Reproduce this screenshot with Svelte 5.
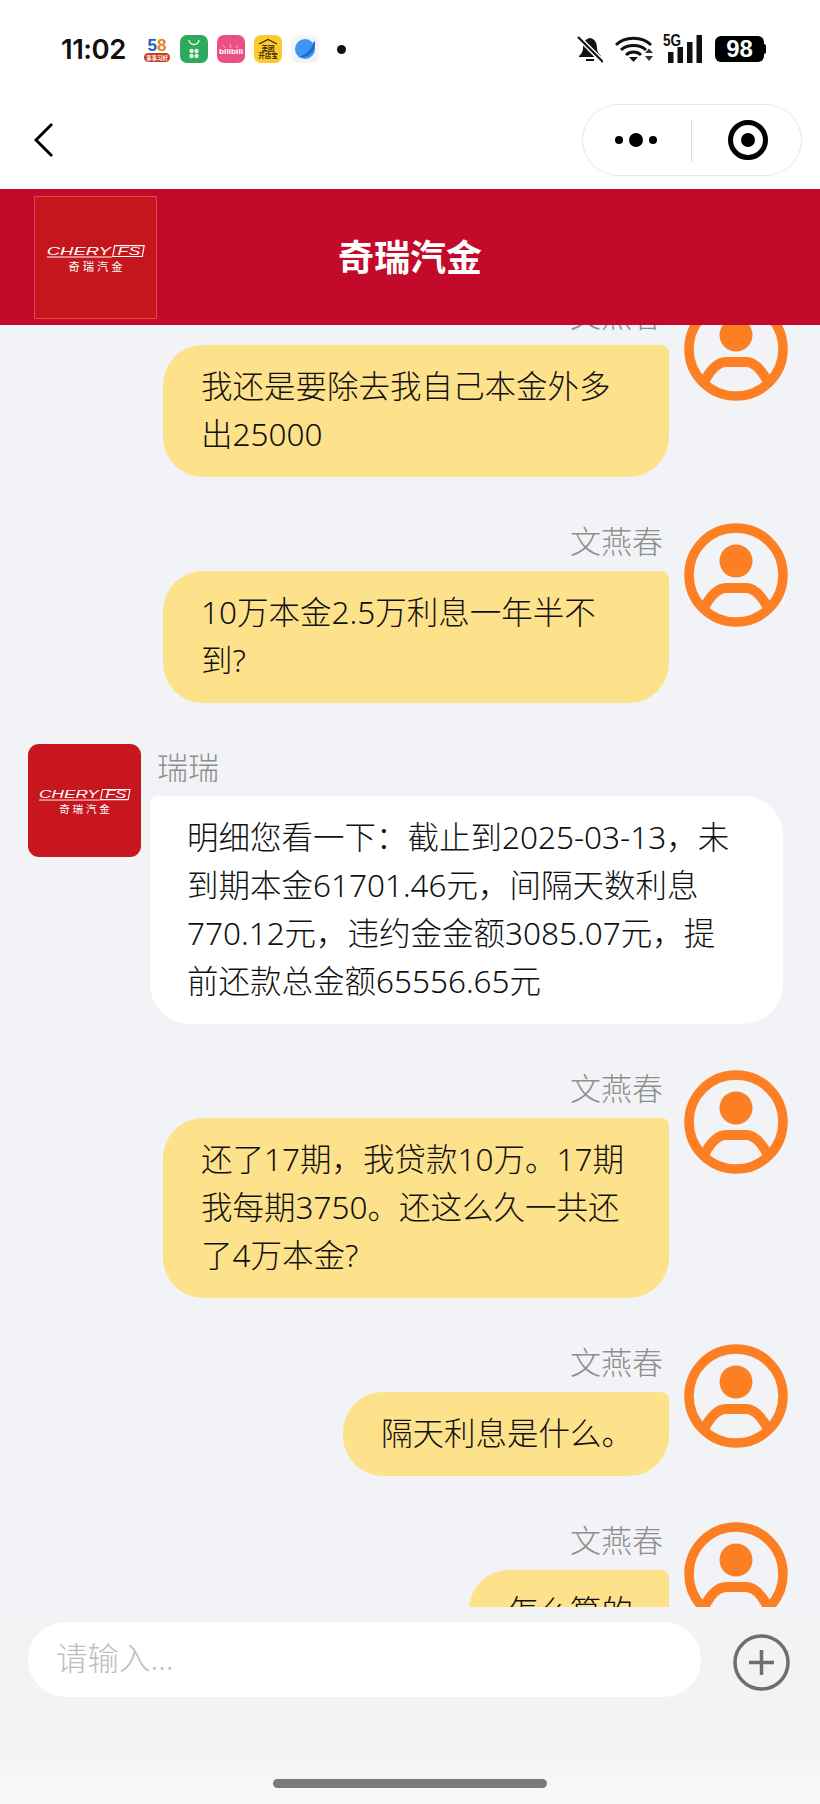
<script>
  const messages = [
    { side: 'right', name: '文燕春', text: '我还是要除去我自己本金外多出25000' },
    { side: 'right', name: '文燕春', text: '10万本金2.5万利息一年半不到?' },
    { side: 'left', name: '瑞瑞', text: '明细您看一下：截止到2025-03-13，未到期本金61701.46元，间隔天数利息770.12元，违约金金额3085.07元，提前还款总金额65556.65元' },
    { side: 'right', name: '文燕春', text: '还了17期，我贷款10万。17期我每期3750。还这么久一共还了4万本金?' },
    { side: 'right', name: '文燕春', text: '隔天利息是什么。' },
    { side: 'right', name: '文燕春', text: '怎么算的' }
  ];
</script>

{#snippet cheryLogo()}
  <svg class="logo-art" viewBox="0 0 123 123">
    <text class="logo-en" x="12" y="59" textLength="65" lengthAdjust="spacingAndGlyphs">CHERY</text>
    <path d="M12 61H78" stroke="#fff" stroke-width="1" />
    <path d="M81 49.500H111L109 60.500H79Z" fill="none" stroke="#fff" stroke-width="1.200" />
    <text class="logo-en" x="84" y="59" textLength="23" lengthAdjust="spacingAndGlyphs">FS</text>
    <text class="logo-cn" x="34" y="75" textLength="55">奇瑞汽金</text>
  </svg>
{/snippet}

{#snippet userAvatar()}
  <svg class="avatar" viewBox="0 0 104 104">
    <circle cx="52" cy="52" r="47" fill="none" stroke="#fd7f23" stroke-width="9.500" />
    <circle cx="52" cy="38" r="16.500" fill="#fd7f23" />
    <path d="M19 87C26 73 34 65 42 65H62C70 65 78 73 85 87" fill="none" stroke="#fd7f23" stroke-width="10" />
  </svg>
{/snippet}

<div class="page">
  <div class="status-bar">
    <span class="time">11:02</span>
    <div class="app-icons">
      <svg class="app" viewBox="0 0 28 28">
        <text x="14" y="15.500" text-anchor="middle" class="t58"><tspan fill="#1e5fc0">5</tspan><tspan fill="#e8841a">8</tspan></text>
        <rect x="1" y="18" width="26" height="9" rx="4.500" fill="#c8401f" />
        <text x="14" y="25" text-anchor="middle" class="tiny" fill="#fff">事事习好</text>
      </svg>
      <svg class="app" viewBox="0 0 28 28">
        <rect width="28" height="28" rx="7" fill="#2fa95c" />
        <path d="M9 5C10 11 18 11 19 5" fill="none" stroke="#fff" stroke-width="1.300" />
        <circle cx="11.500" cy="16" r="2.200" fill="#dff3e5" />
        <circle cx="16.500" cy="16" r="2.200" fill="#dff3e5" />
        <circle cx="11.500" cy="21" r="2.200" fill="#dff3e5" />
        <circle cx="16.500" cy="21" r="2.200" fill="#dff3e5" />
      </svg>
      <svg class="app" viewBox="0 0 28 28">
        <rect width="28" height="28" rx="7" fill="#ec4f86" />
        <path d="M6 10L8 13M13 9L14 13M21 10L19 13" stroke="#f9c4d8" stroke-width="0.800" />
        <text x="14" y="19" text-anchor="middle" class="bili" fill="#fff" textLength="24" lengthAdjust="spacingAndGlyphs">bilibili</text>
      </svg>
      <svg class="app" viewBox="0 0 28 28">
        <rect width="28" height="28" rx="7" fill="#fdc92c" />
        <path d="M5 9L14 4.500L23 9" fill="none" stroke="#3a2c05" stroke-width="1.200" />
        <text x="14" y="15.500" text-anchor="middle" class="tiny2" fill="#3a2c05">美团</text>
        <text x="14" y="23" text-anchor="middle" class="tiny2" fill="#3a2c05">开店宝</text>
      </svg>
      <svg class="app" viewBox="0 0 28 28">
        <rect width="28" height="28" rx="7" fill="#f2f4f5" />
        <circle cx="14" cy="14" r="10" fill="#3f95f2" />
        <path d="M7 22C14 21 21 15 23 6L24 7C25 14 20 24 7 22Z" fill="#1f66d0" />
      </svg>
      <span class="dot"></span>
    </div>
    <div class="status-right">
      <svg class="bell" viewBox="0 0 26 27">
        <path d="M13 2C8 3 6 7 6 12C6 16 4 18 2 20V21H24V20C22 18 20 16 20 12C20 7 18 3 13 2Z" fill="#111" />
        <path d="M9 24H17" stroke="#111" stroke-width="2" />
        <path d="M1 1L26 26" stroke="#fff" stroke-width="5" />
        <path d="M1 1L26 26" stroke="#111" stroke-width="2.200" />
      </svg>
      <svg class="wifi" viewBox="0 0 38 28">
        <path d="M1 10C10 1 27 1 36 10" fill="none" stroke="#111" stroke-width="3" />
        <path d="M6 15C12 9 25 9 31 15" fill="none" stroke="#111" stroke-width="3" />
        <path d="M11 20C15 16 22 16 26 20" fill="none" stroke="#111" stroke-width="3" />
        <path d="M14 22H23L18.500 27Z" fill="#111" />
        <path d="M30 18H38L34 13.500Z M30 21H38L34 26Z" fill="#333" />
      </svg>
      <div class="signal">
        <span class="five-g">5G</span>
        <svg class="bars" viewBox="0 0 34 28">
          <rect x="0" y="17" width="5.500" height="11" fill="#111" />
          <rect x="9.500" y="12" width="5.500" height="16" fill="#111" />
          <rect x="19" y="7" width="5.500" height="21" fill="#111" />
          <rect x="28.500" y="0" width="5.500" height="28" fill="#111" />
        </svg>
      </div>
      <div class="battery"><span>98</span></div>
    </div>
  </div>

  <div class="nav-bar">
    <svg class="back" viewBox="0 0 20 36">
      <path d="M18 2L2 18L18 34" fill="none" stroke="#000" stroke-width="3" />
    </svg>
    <div class="capsule">
      <div class="more">
        <span class="small"></span><span class="big"></span><span class="small"></span>
      </div>
      <span class="divider"></span>
      <svg class="target" viewBox="0 0 40 40">
        <circle cx="20" cy="20" r="17.500" fill="none" stroke="#000" stroke-width="5" />
        <circle cx="20" cy="20" r="7" fill="#000" />
      </svg>
    </div>
  </div>

  <header class="top">
    <div class="top-logo">{@render cheryLogo()}</div>
    <h1>奇瑞汽金</h1>
  </header>

  <main class="messages">
    {#each messages as m}
      <div class="row {m.side}">
        {#if m.side === 'left'}
          <div class="agent-avatar">{@render cheryLogo()}</div>
        {/if}
        <div class="content">
          <div class="name">{m.name}</div>
          <div class="bubble">{m.text}</div>
        </div>
        {#if m.side === 'right'}
          {@render userAvatar()}
        {/if}
      </div>
    {/each}
  </main>

  <footer class="footer">
    <div class="input-row">
      <div class="input">请输入...</div>
      <svg class="plus" viewBox="0 0 57 57">
        <circle cx="28.500" cy="28.500" r="26.500" fill="none" stroke="#6e6e6e" stroke-width="3.500" />
        <path d="M16 28.500H41M28.500 16V41" stroke="#6e6e6e" stroke-width="3.500" />
      </svg>
    </div>
    <div class="home-bar"></div>
  </footer>
</div>

<style>
  :global(body) {
    margin: 0;
    background: #f1f3f6;
  }

  .page {
    width: 820px;
    height: 1804px;
    display: flex;
    flex-direction: column;
    overflow: hidden;
    background: #f1f3f6;
    font-family: 'Noto Sans', 'Noto Sans CJK SC', sans-serif;
  }

  .status-bar {
    height: 98px;
    flex: none;
    display: flex;
    align-items: center;
    background: #fff;
    padding: 0 55px 0 61px;
    box-sizing: border-box;
  }

  .time {
    font-family: Inter, sans-serif;
    font-size: 27.500px;
    font-weight: 600;
    letter-spacing: -0.500px;
    color: #111;
    width: 82px;
  }

  .app-icons {
    display: flex;
    align-items: center;
    gap: 9px;
  }

  .app {
    width: 28px;
    height: 28px;
    display: block;
  }

  .t58 {
    font: 700 17px 'Liberation Sans', sans-serif;
  }

  .tiny {
    font: 700 5.500px 'Noto Sans CJK SC', sans-serif;
  }

  .tiny2 {
    font: 700 6.500px 'Noto Sans CJK SC', sans-serif;
  }

  .bili {
    font: 700 8px 'Liberation Sans', sans-serif;
  }

  .dot {
    width: 9px;
    height: 9px;
    border-radius: 50%;
    background: #111;
    margin-left: 9px;
  }

  .status-right {
    margin-left: auto;
    display: flex;
    align-items: center;
  }

  .bell {
    width: 26px;
    height: 27px;
    margin-right: 12px;
  }

  .wifi {
    width: 38px;
    height: 28px;
    margin-right: 10px;
  }

  .signal {
    position: relative;
    width: 39px;
    height: 28px;
    margin-right: 13px;
  }

  .five-g {
    position: absolute;
    z-index: 1;
    left: 0;
    top: -2px;
    font: 700 16px/15px 'Liberation Sans', sans-serif;
    transform: scaleX(0.85);
    transform-origin: left;
    color: #111;
  }

  .bars {
    position: absolute;
    right: 0;
    top: 0;
    width: 34px;
    height: 28px;
  }

  .battery {
    position: relative;
    width: 49px;
    height: 26px;
    margin-right: 1px;
    border-radius: 6px;
    background: #000;
    display: flex;
    align-items: center;
    justify-content: center;
    color: #fff;
    font: 700 24px 'Liberation Sans', sans-serif;
  }

  .battery::after {
    content: '';
    position: absolute;
    right: -2px;
    top: 8px;
    width: 2px;
    height: 10px;
    border-radius: 0 2px 2px 0;
    background: #000;
  }

  .nav-bar {
    height: 91px;
    flex: none;
    display: flex;
    align-items: center;
    justify-content: space-between;
    background: #fff;
    padding: 0 18px 7px 34px;
    box-sizing: border-box;
  }

  .back {
    width: 20px;
    height: 36px;
  }

  .capsule {
    width: 220px;
    height: 72px;
    box-sizing: border-box;
    border: 1px solid #e6e6e6;
    border-radius: 36px;
    display: flex;
    align-items: center;
    padding-left: 32px;
  }

  .more {
    display: flex;
    align-items: center;
    gap: 6px;
    width: 76px;
  }

  .more span {
    display: block;
    border-radius: 50%;
    background: #000;
  }

  .small {
    width: 8px;
    height: 8px;
  }

  .big {
    width: 14px;
    height: 14px;
  }

  .divider {
    width: 1px;
    height: 43px;
    background: #dcdcdc;
  }

  .target {
    width: 40px;
    height: 40px;
    margin-left: 36px;
  }

  .top {
    height: 136px;
    flex: none;
    box-sizing: border-box;
    background: #c30a2b;
    display: grid;
    grid-template-columns: 1fr auto 1fr;
    align-items: center;
    padding-left: 34px;
    padding-right: 34px;
  }

  .top-logo {
    width: 123px;
    height: 123px;
    box-sizing: border-box;
    background: #c5161d;
    border: 1px solid #dc4750;
  }

  .top h1 {
    margin: 0 0 4px;
    font-size: 36px;
    font-weight: 700;
    color: #fff;
  }

  .logo-art {
    display: block;
    width: 100%;
    height: 100%;
  }

  .logo-en {
    font: italic 400 12px 'Liberation Sans', sans-serif;
    fill: #fff;
  }

  .logo-cn {
    font: 400 11.500px 'Noto Sans CJK SC', sans-serif;
    fill: #fff;
  }

  .messages {
    flex: 1;
    min-height: 0;
    overflow: hidden;
  }

  .messages .row:first-child {
    margin-top: -28px;
  }

  .row {
    display: flex;
    align-items: flex-start;
    margin-bottom: 46px;
  }

  .row.right {
    justify-content: flex-end;
    padding-right: 32px;
  }

  .row.left {
    padding-left: 28px;
    margin-top: -5px;
  }

  .avatar {
    width: 104px;
    height: 104px;
    flex: none;
    margin-left: 15px;
  }

  .agent-avatar {
    width: 113px;
    height: 113px;
    flex: none;
    border-radius: 11px;
    background: #c8161e;
    overflow: hidden;
  }

  .content {
    display: flex;
    flex-direction: column;
  }

  .right .content {
    align-items: flex-end;
  }

  .left .content {
    align-items: flex-start;
    margin-left: 9px;
  }

  .name {
    font-size: 31px;
    font-weight: 300;
    color: #8e8e8e;
    padding: 0 6px;
    box-sizing: border-box;
  }

  .right .name {
    height: 48px;
    line-height: 36px;
  }

  .left .name {
    height: 52px;
    line-height: 46px;
    padding: 0 7px;
  }

  .bubble {
    box-sizing: border-box;
    padding: 17px 37px 19px;
    font-size: 31.500px;
    font-weight: 300;
    line-height: 48px;
    color: #111;
    border-radius: 40px;
  }

  .right .bubble {
    max-width: 506px;
    padding-left: 38px;
    padding-right: 36px;
    background: #fee18b;
    border-top-right-radius: 8px;
  }

  .left .bubble {
    width: 633px;
    background: #fff;
    border-top-left-radius: 8px;
  }

  .footer {
    height: 197px;
    flex: none;
    box-sizing: border-box;
    padding-top: 15px;
    background: linear-gradient(#f2f3f5 75%, #f7f7f7 85%);
  }

  .input-row {
    display: flex;
    align-items: center;
    padding: 0 30px 0 28px;
  }

  .input {
    flex: 1;
    height: 75px;
    max-width: 673px;
    line-height: 72px;
    padding-left: 28px;
    box-sizing: border-box;
    background: #fff;
    border-radius: 38px;
    font-size: 31.500px;
    font-weight: 300;
    color: #bdbdbd;
  }

  .plus {
    width: 57px;
    height: 57px;
    margin-left: auto;
    margin-top: 6px;
  }

  .home-bar {
    width: 274px;
    height: 9px;
    margin: 82px auto 0;
    border-radius: 5px;
    background: #7a7a7a;
  }
</style>
